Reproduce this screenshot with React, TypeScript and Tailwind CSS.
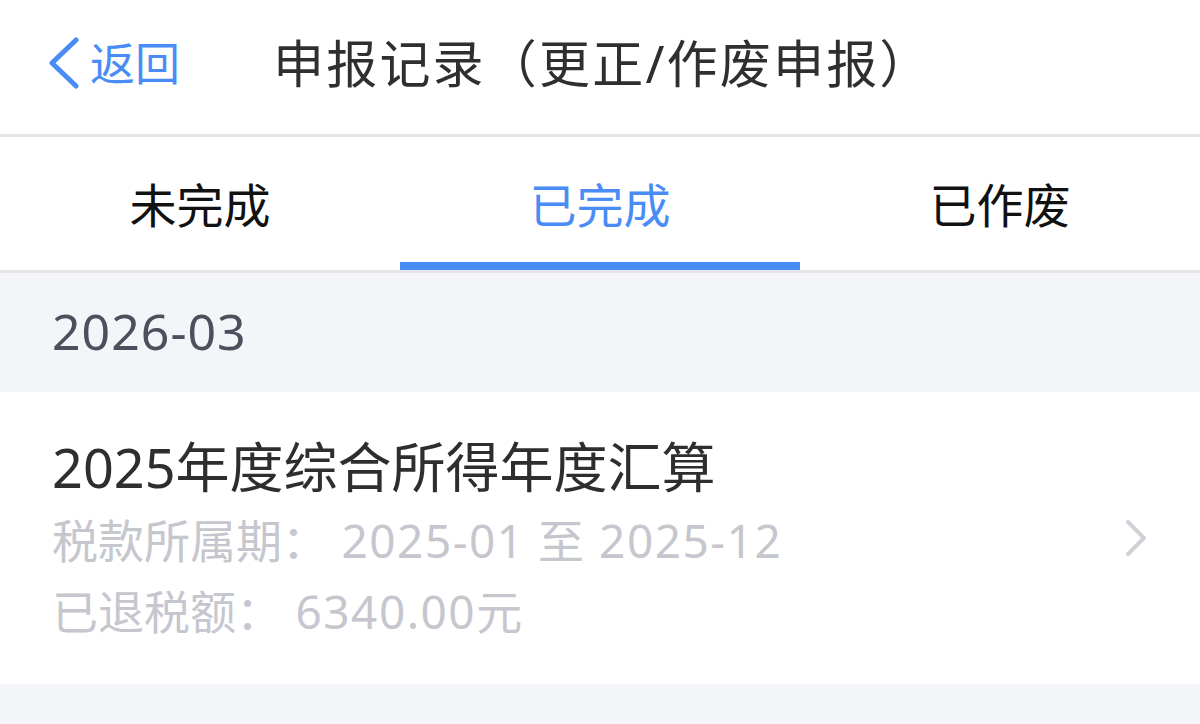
import React from "react";

const font = { fontFamily: '"Noto Sans", "Noto Sans CJK SC", sans-serif' };

export default function App() {
  return (
    <div className="w-[1200px] h-[724px] overflow-hidden bg-[#f4f5f9] flex flex-col" style={font}>
      {/* Header */}
      <div className="h-[134px] bg-white flex items-center shrink-0 pb-[8px]">
        <div className="flex items-center pl-[48px] w-[273px] shrink-0">
          <svg width="32" height="52" viewBox="0 0 32 52" className="shrink-0">
            <path d="M28 3 L4 26 L28 49" fill="none" stroke="#4a8cf5" strokeWidth="5" strokeLinecap="round" strokeLinejoin="round" />
          </svg>
          <span className="ml-[10px] text-[45px] leading-none text-[#4a8cf5]">返回</span>
        </div>
        <span className="text-[51px] leading-none text-[#2f2f2f] tracking-[2.2px]">申报记录（更正/作废申报）</span>
      </div>
      <div className="h-[3px] bg-[#e3e3e8] shrink-0" />
      {/* Tabs */}
      <div className="h-[133px] bg-white flex shrink-0">
        <div className="flex-1 flex flex-col">
          <div className="flex-1 flex items-center justify-center pt-[12px] text-[47px] leading-none text-[#111]">未完成</div>
          <div className="h-[8px]" />
        </div>
        <div className="flex-1 flex flex-col">
          <div className="flex-1 flex items-center justify-center pt-[12px] text-[47px] leading-none text-[#4a8cf5]">已完成</div>
          <div className="h-[8px] bg-[#4a8cf5]" />
        </div>
        <div className="flex-1 flex flex-col">
          <div className="flex-1 flex items-center justify-center pt-[12px] text-[47px] leading-none text-[#111]">已作废</div>
          <div className="h-[8px]" />
        </div>
      </div>
      <div className="h-[3px] bg-[#e6e6eb] shrink-0" />
      {/* Date group */}
      <div className="h-[119px] flex items-center pl-[52px] shrink-0 pb-[4px]">
        <span className="text-[50px] leading-none text-[#4c505c] tracking-[1px]">2026-03</span>
      </div>
      {/* Card */}
      <div className="h-[292px] bg-white flex items-center shrink-0">
        <div className="flex-1 flex flex-col pl-[52px]">
          <div className="text-[54px] leading-[76px] text-[#2e2e2e]">2025年度综合所得年度汇算</div>
          <div className="text-[46px] leading-[71px] text-[#c6c7ce]">
            税款所属期：<span className="tracking-[1.5px]"> 2025-01 至 2025-12</span>
          </div>
          <div className="text-[46px] leading-[71px] text-[#c6c7ce]">
            已退税额：<span className="tracking-[1.5px]"> 6340.00元</span>
          </div>
        </div>
        <svg width="26" height="38" viewBox="0 0 26 38" className="mr-[50px] shrink-0">
          <path d="M4 3 L20 19 L4 35" fill="none" stroke="#d0d0d6" strokeWidth="4" strokeLinecap="round" strokeLinejoin="round" />
        </svg>
      </div>
      <div className="flex-1" />
    </div>
  );
}
